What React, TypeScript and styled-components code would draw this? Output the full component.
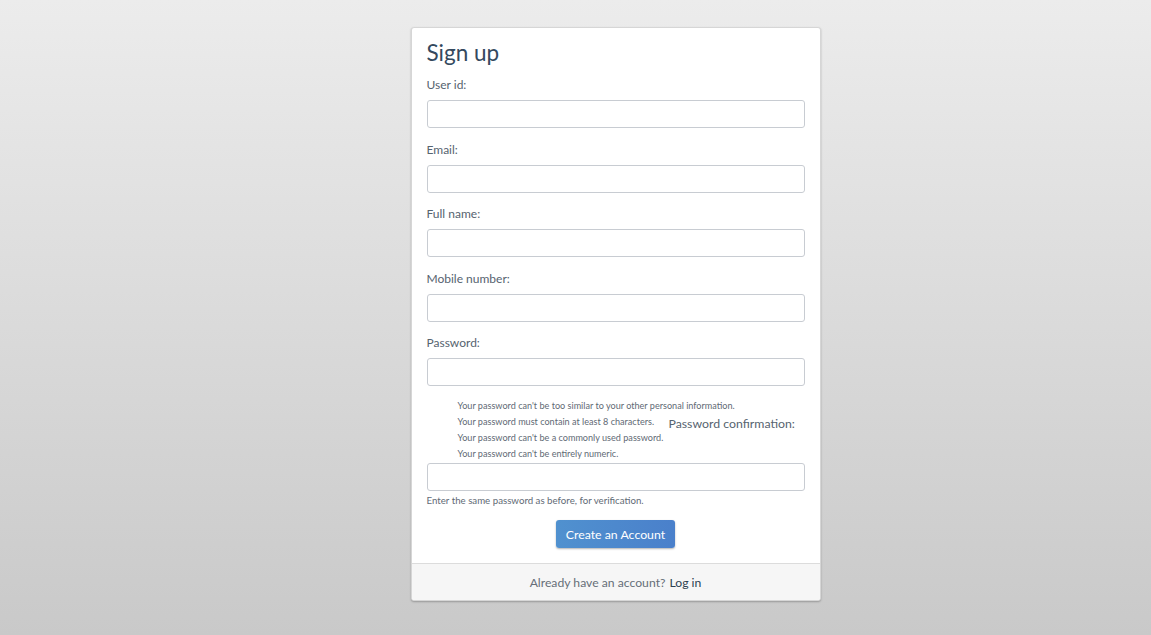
import React from 'react';
import styled, { createGlobalStyle } from 'styled-components';

const GlobalStyle = createGlobalStyle`
  html, body {
    margin: 0;
    padding: 0;
    height: 100%;
  }
  body {
    font-family: 'Lato', 'Open Sans', sans-serif;
    color: #2c3e50;
  }
  * {
    box-sizing: border-box;
  }
`;

const Page = styled.div`
  min-height: 100vh;
  background: linear-gradient(to bottom, #ececec 0%, #c9c9c9 100%);
  padding: 27px 0 0 80px;
`;

const Card = styled.div`
  width: 410px;
  margin: 0 auto;
  background: #fff;
  border: 1px solid #d6d6d6;
  border-radius: 3px;
  box-shadow: 0 1px 2px rgba(0, 0, 0, 0.25);
  overflow: hidden;
`;

const CardBody = styled.form`
  padding: 10px 15px 15px;
`;

const Title = styled.h3`
  margin: 0 0 7px;
  font-size: 22.5px;
  line-height: 30px;
  font-weight: 400;
  color: #34495e;
`;

const Field = styled.div<{ gap?: number }>`
  margin-bottom: ${({ gap }) => (gap === undefined ? 11.5 : gap)}px;
`;

const Label = styled.label`
  display: block;
  font-size: 12px;
  line-height: 20px;
  color: #56636f;
  margin-bottom: 5px;
`;

const Input = styled.input`
  display: block;
  width: 100%;
  height: 28px;
  border: 1px solid #c8ccd2;
  border-radius: 3px;
  padding: 4px 8px;
  font-size: 13px;
  font-family: inherit;
  outline: none;
`;

const HelpRow = styled.div`
  display: flex;
  align-items: flex-start;
  margin: 12px 0 1px;
`;

const HelpList = styled.ul`
  flex: 0 0 242px;
  min-width: 0;
  margin: 0;
  padding-left: 31px;
  list-style: none;
  white-space: nowrap;
`;

const HelpItem = styled.li`
  font-size: 9.1px;
  line-height: 16px;
  color: #5f6a75;
`;

const ConfirmLabel = styled.label`
  margin-top: 17px;
  font-size: 12.3px;
  line-height: 18px;
  white-space: nowrap;
  color: #56636f;
`;

const HelpText = styled.div`
  margin: 2px 0 13px;
  font-size: 9.7px;
  line-height: 14px;
  color: #5f6a75;
`;

const ButtonRow = styled.div`
  display: flex;
  justify-content: center;
`;

const SubmitButton = styled.button`
  height: 28px;
  padding: 0 10px;
  border: none;
  border-radius: 3px;
  background: linear-gradient(to right, #5091cf, #4a80cb);
  color: #fff;
  font-family: inherit;
  font-size: 12.3px;
  box-shadow: 0 1px 2px rgba(0, 0, 0, 0.3);
  cursor: pointer;
`;

const Footer = styled.div`
  height: 37px;
  border-top: 1px solid #dcdcdc;
  background: #f6f6f6;
  display: flex;
  align-items: center;
  justify-content: center;
  font-size: 12.2px;
  color: #666f78;
`;

const LoginLink = styled.a`
  color: #2c3e50;
  text-decoration: none;
  margin-left: 4px;
  cursor: pointer;
`;

const fields = [
  { id: 'user_id', label: 'User id:', type: 'text' },
  { id: 'email', label: 'Email:', type: 'email' },
  { id: 'full_name', label: 'Full name:', type: 'text' },
  { id: 'mobile', label: 'Mobile number:', type: 'text' },
];

const passwordHints = [
  "Your password can't be too similar to your other personal information.",
  'Your password must contain at least 8 characters.',
  "Your password can't be a commonly used password.",
  "Your password can't be entirely numeric.",
];

const App = () => {
  return (
    <Page>
      <GlobalStyle />
      <Card>
        <CardBody onSubmit={(e) => e.preventDefault()}>
          <Title>Sign up</Title>
          {fields.map((f) => (
            <Field key={f.id}>
              <Label htmlFor={f.id}>{f.label}</Label>
              <Input id={f.id} type={f.type} />
            </Field>
          ))}
          <Field gap={0}>
            <Label htmlFor="password1">Password:</Label>
            <Input id="password1" type="password" />
          </Field>
          <HelpRow>
            <HelpList>
              {passwordHints.map((hint) => (
                <HelpItem key={hint}>{hint}</HelpItem>
              ))}
            </HelpList>
            <ConfirmLabel htmlFor="password2">Password confirmation:</ConfirmLabel>
          </HelpRow>
          <Input id="password2" type="password" />
          <HelpText>Enter the same password as before, for verification.</HelpText>
          <ButtonRow>
            <SubmitButton type="submit">Create an Account</SubmitButton>
          </ButtonRow>
        </CardBody>
        <Footer>
          Already have an account?<LoginLink>Log in</LoginLink>
        </Footer>
      </Card>
    </Page>
  );
};

export default App;
